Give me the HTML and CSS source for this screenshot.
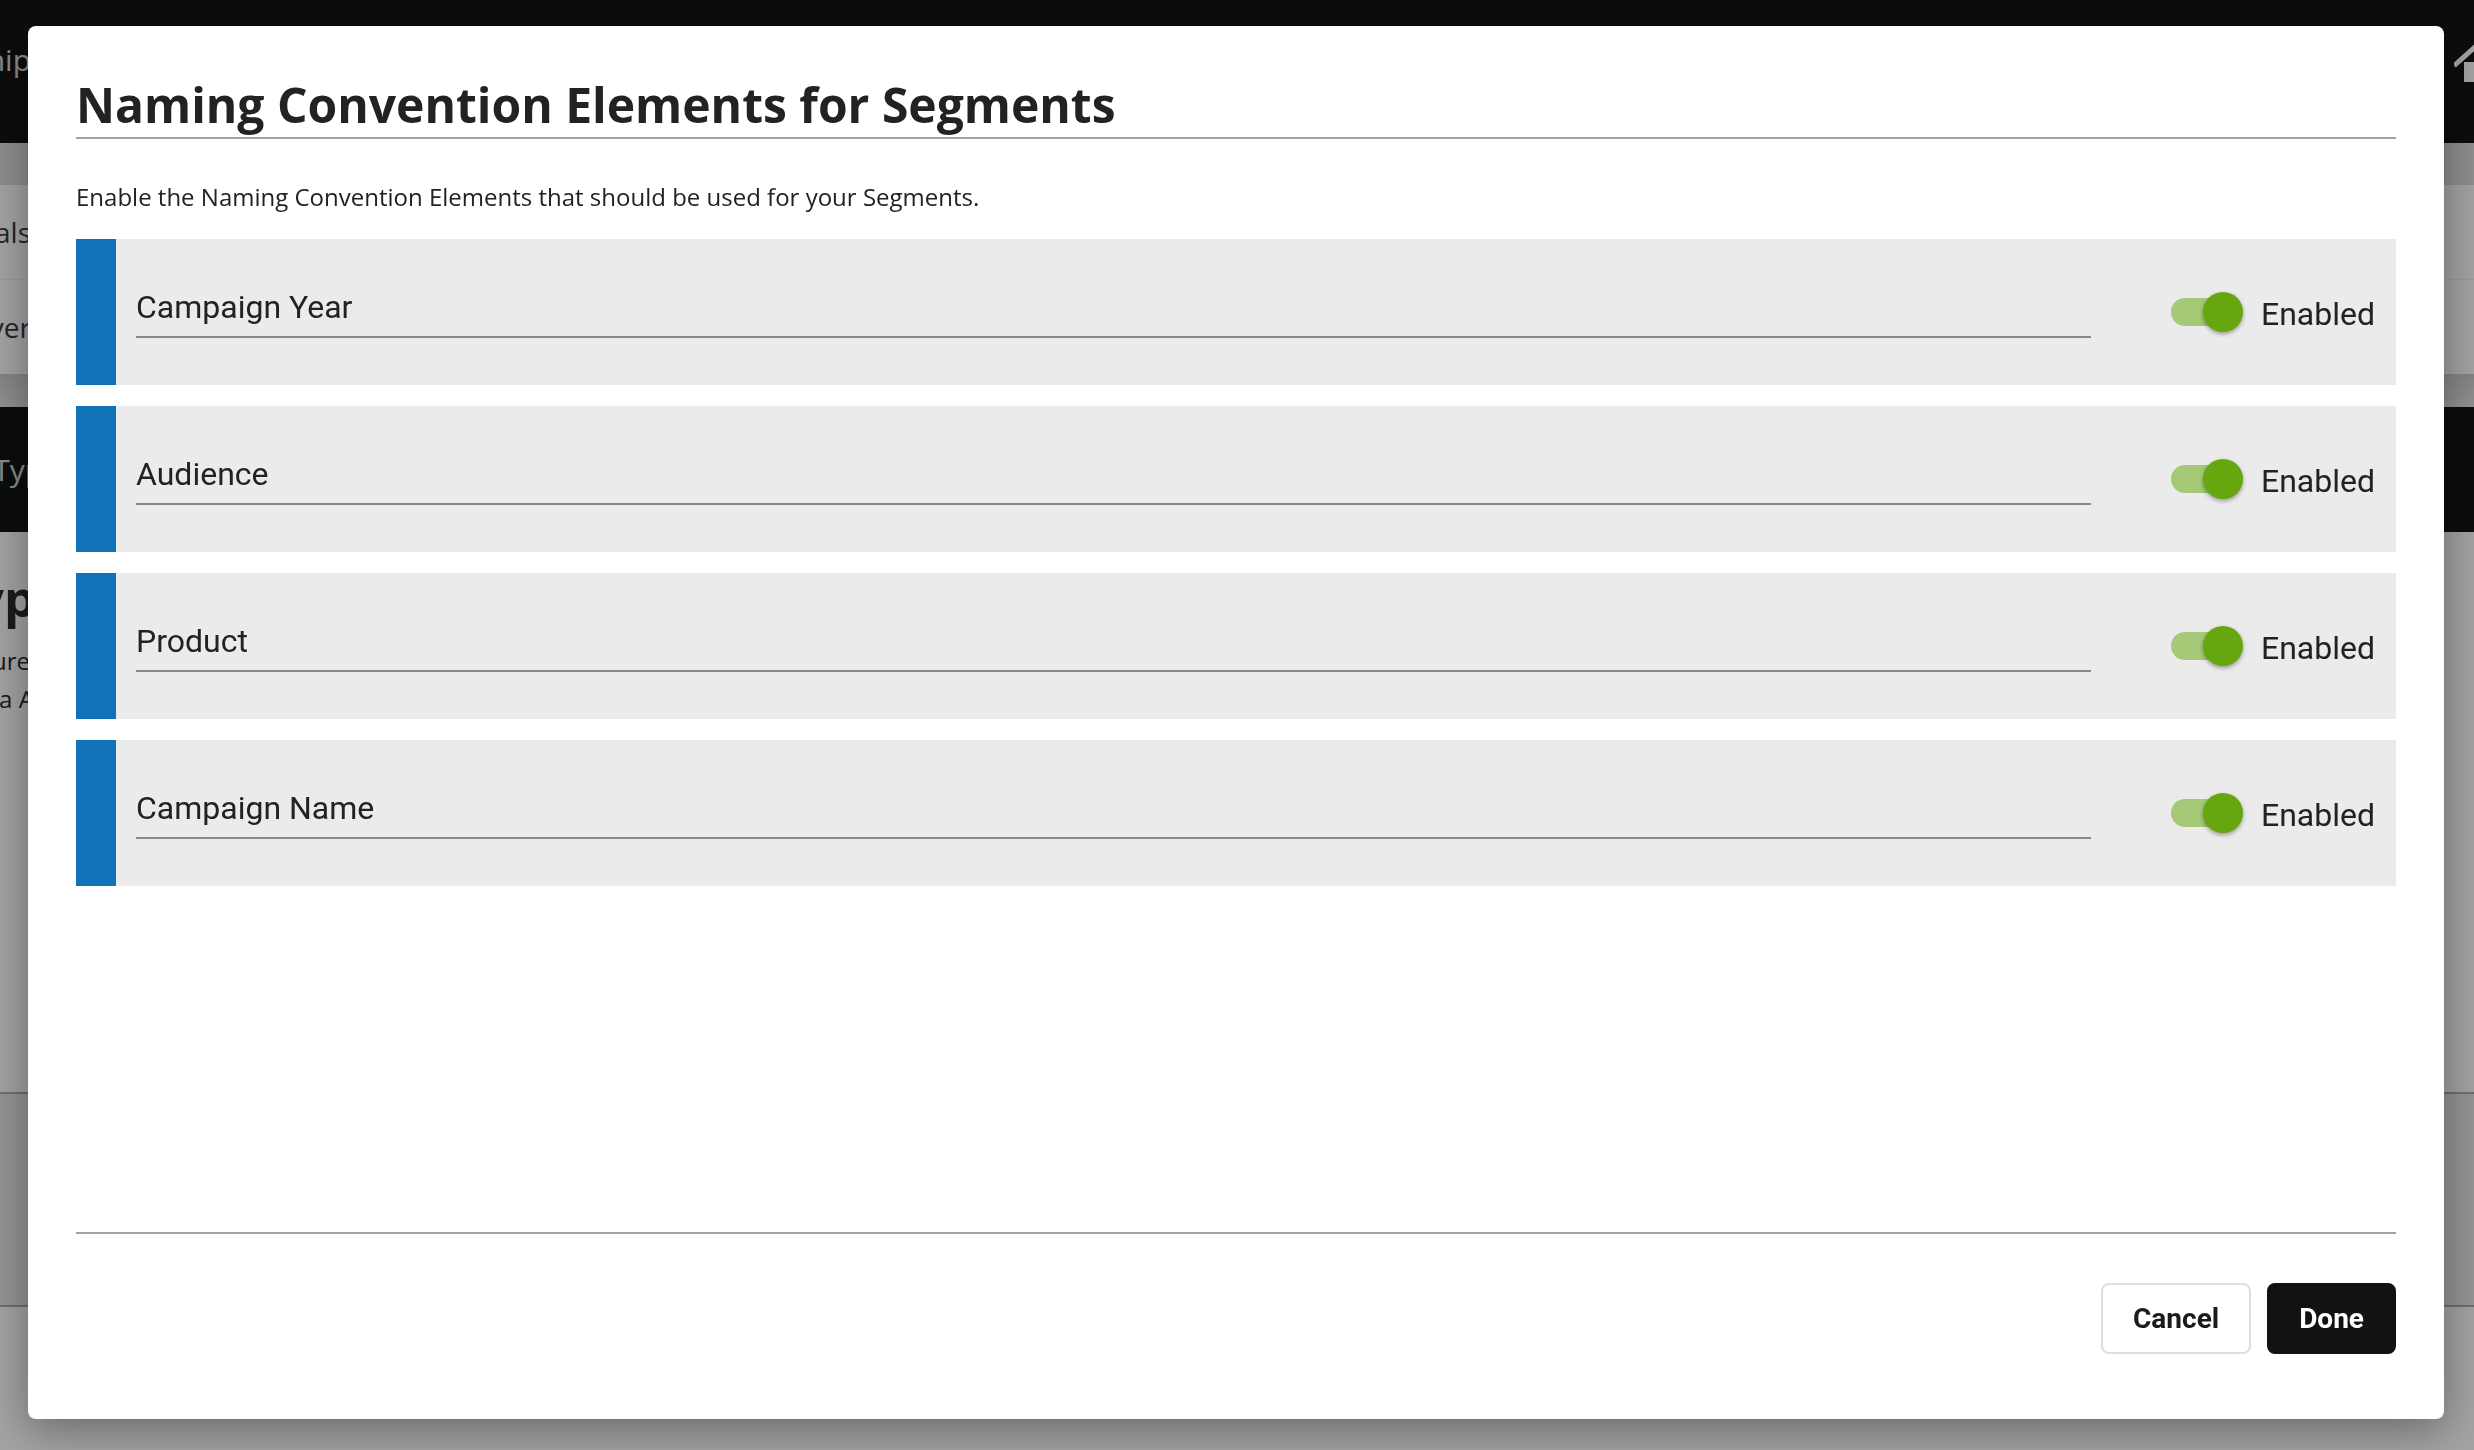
FILE: index.html
```html
<!DOCTYPE html>
<html lang="en">
<head>
<meta charset="utf-8">
<title>Naming Convention Elements for Segments</title>
<link rel="stylesheet" href="styles.css">
</head>
<body>
<div class="page">
  <header class="app-header">
    <div class="frag frag-header"><span>Relationship</span></div>
    <svg class="home-icon" viewBox="0 0 44 40" width="44" height="40" aria-hidden="true">
      <polyline points="2,20 22,2 42,20" fill="none" stroke="#ffffff" stroke-width="5" stroke-linecap="square"/>
      <rect x="10" y="18" width="24" height="20" fill="#ffffff"/>
    </svg>
  </header>
  <div class="subbar"></div>
  <div class="list-row list-row-line"><div class="frag frag-row"><span>Goals</span></div></div>
  <div class="list-row"><div class="frag frag-row"><span>Server</span></div></div>
  <div class="band"></div>
  <div class="dark-band"><div class="frag frag-type"><span>Type</span></div></div>
  <div class="content">
    <div class="frag frag-heading"><span>Types</span></div>
    <div class="frag frag-text"><span>Configure</span></div>
    <div class="frag frag-text2"><span>via a API</span></div>
  </div>
  <div class="panel"></div>
  <div class="rest"></div>
</div>

<div class="overlay">
  <div class="modal" role="dialog" aria-labelledby="modal-title">
    <div class="modal-header">
      <h1 class="modal-title" id="modal-title">Naming Convention Elements for Segments</h1>
    </div>
    <p class="modal-desc">Enable the Naming Convention Elements that should be used for your Segments.</p>
    <div class="elements">
      <div class="element">
        <div class="element-bar"></div>
        <div class="field">Campaign Year</div>
        <div class="switch"><div class="switch-track"></div><div class="switch-thumb"></div></div>
        <div class="switch-label">Enabled</div>
      </div>
      <div class="element">
        <div class="element-bar"></div>
        <div class="field">Audience</div>
        <div class="switch"><div class="switch-track"></div><div class="switch-thumb"></div></div>
        <div class="switch-label">Enabled</div>
      </div>
      <div class="element">
        <div class="element-bar"></div>
        <div class="field">Product</div>
        <div class="switch"><div class="switch-track"></div><div class="switch-thumb"></div></div>
        <div class="switch-label">Enabled</div>
      </div>
      <div class="element">
        <div class="element-bar"></div>
        <div class="field">Campaign Name</div>
        <div class="switch"><div class="switch-track"></div><div class="switch-thumb"></div></div>
        <div class="switch-label">Enabled</div>
      </div>
    </div>
    <div class="spacer"></div>
    <div class="modal-footer">
      <button class="btn btn-cancel" type="button">Cancel</button>
      <button class="btn btn-done" type="button">Done</button>
    </div>
  </div>
</div>
</body>
</html>
```

FILE: styles.css
```css
html, body {
  margin: 0;
  padding: 0;
}

body {
  overflow: hidden;
  font-family: "Open Sans", "Liberation Sans", sans-serif;
  background: #ffffff;
}

/* ---------- background page ---------- */
.page {
  width: 100%;
}

.frag {
  display: flex;
  justify-content: flex-end;
  white-space: nowrap;
}

.app-header {
  height: 143px;
  background: #131414;
  display: flex;
  justify-content: space-between;
  align-items: flex-start;
}

.frag-header {
  width: 31px;
  padding-top: 40px;
  font-size: 30px;
  line-height: 40px;
  color: #dcdcdc;
}

.home-icon {
  margin-top: 44px;
  margin-right: -24px;
  flex: none;
}

.subbar {
  height: 42px;
  background: #dfdfdf;
}

.list-row {
  height: 94px;
  background: #ffffff;
  display: flex;
  align-items: center;
}

.list-row-line {
  border-bottom: 1px solid #f2f2f2;
}

.frag-row {
  width: 31px;
  font-size: 28px;
  color: #3a3a3a;
}

.band {
  height: 33px;
  background: linear-gradient(#cfcfcf, #e4e4e4);
}

.dark-band {
  height: 125px;
  background: #131414;
  display: flex;
  align-items: center;
}

.frag-type {
  width: 60px;
  font-size: 30px;
  color: #d8d8d8;
}

.content {
  height: 560px;
  background: #ffffff;
  padding-top: 38px;
  box-sizing: border-box;
}

.frag-heading {
  width: 90px;
  font-size: 50px;
  line-height: 56px;
  font-weight: 700;
  color: #2a2a2a;
}

.frag-text {
  width: 30px;
  font-size: 24px;
  line-height: 37px;
  color: #2a2a2a;
  margin-top: 16px;
}

.frag-text2 {
  width: 55px;
  font-size: 24px;
  line-height: 40px;
  color: #2a2a2a;
  margin-top: 0;
}

.panel {
  height: 211px;
  background: #e9e9e9;
  border-top: 2px solid #adadad;
  border-bottom: 2px solid #adadad;
}

.rest {
  height: 200px;
  background: #ffffff;
}

/* ---------- overlay + modal ---------- */
.overlay {
  position: fixed;
  inset: 0;
  background: rgba(0, 0, 0, 0.36);
  display: flex;
  padding: 26px 30px 31px 28px;
  box-sizing: border-box;
}

.modal {
  flex: 1;
  background: #ffffff;
  border-radius: 8px;
  box-shadow: 0 10px 46px rgba(0, 0, 0, 0.38);
  display: flex;
  flex-direction: column;
  padding: 0 48px;
  min-width: 0;
}

.modal-header {
  padding-top: 51px;
  padding-bottom: 4px;
  border-bottom: 2px solid #a0a2a3;
}

.modal-title {
  margin: 0;
  font-family: "Open Sans", "Liberation Sans", sans-serif;
  font-weight: 700;
  font-size: 48px;
  line-height: 56px;
  color: #222222;
}

.modal-desc {
  margin: 43px 0 0;
  font-family: "Open Sans", "Liberation Sans", sans-serif;
  font-size: 24px;
  line-height: 30px;
  color: #222222;
}

.elements {
  margin-top: 27px;
  display: flex;
  flex-direction: column;
  gap: 21px;
}

.element {
  height: 146px;
  display: flex;
  background: #ebebeb;
  padding-right: 21px;
}

.element-bar {
  width: 40px;
  background: #1172b8;
  flex: none;
}

.field {
  flex: 1;
  align-self: flex-start;
  margin: 0 80px 0 20px;
  padding-top: 48px;
  padding-bottom: 9px;
  border-bottom: 2px solid #888888;
  font-family: Roboto, "Liberation Sans", sans-serif;
  font-size: 32px;
  line-height: 40px;
  color: #222222;
}

.switch {
  position: relative;
  width: 72px;
  height: 40px;
  align-self: center;
  flex: none;
}

.switch-track {
  margin-top: 6px;
  width: 66px;
  height: 28px;
  border-radius: 14px;
  background: #a6c977;
}

.switch-thumb {
  position: absolute;
  right: 0;
  top: 0;
  width: 40px;
  height: 40px;
  border-radius: 50%;
  background: #66a60e;
  box-shadow: 0 2px 4px rgba(0, 0, 0, 0.35);
}

.switch-label {
  align-self: center;
  margin-left: 18px;
  padding-top: 4px;
  font-family: Roboto, "Liberation Sans", sans-serif;
  font-size: 32px;
  line-height: 40px;
  color: #222222;
  flex: none;
}

.spacer {
  flex: 1;
}

.modal-footer {
  border-top: 2px solid #a0a2a3;
  padding: 49px 0 65px;
  display: flex;
  justify-content: flex-end;
  gap: 16px;
}

.btn {
  height: 71px;
  box-sizing: border-box;
  padding: 0 30px;
  border: 2px solid;
  border-radius: 8px;
  font-family: Roboto, "Liberation Sans", sans-serif;
  font-weight: 700;
  font-size: 28px;
  line-height: 1;
  cursor: pointer;
}

.btn-cancel {
  background: #ffffff;
  border-color: #dedede;
  color: #1b1b1b;
}

.btn-done {
  background: #111312;
  border-color: #111312;
  color: #ffffff;
}
```
